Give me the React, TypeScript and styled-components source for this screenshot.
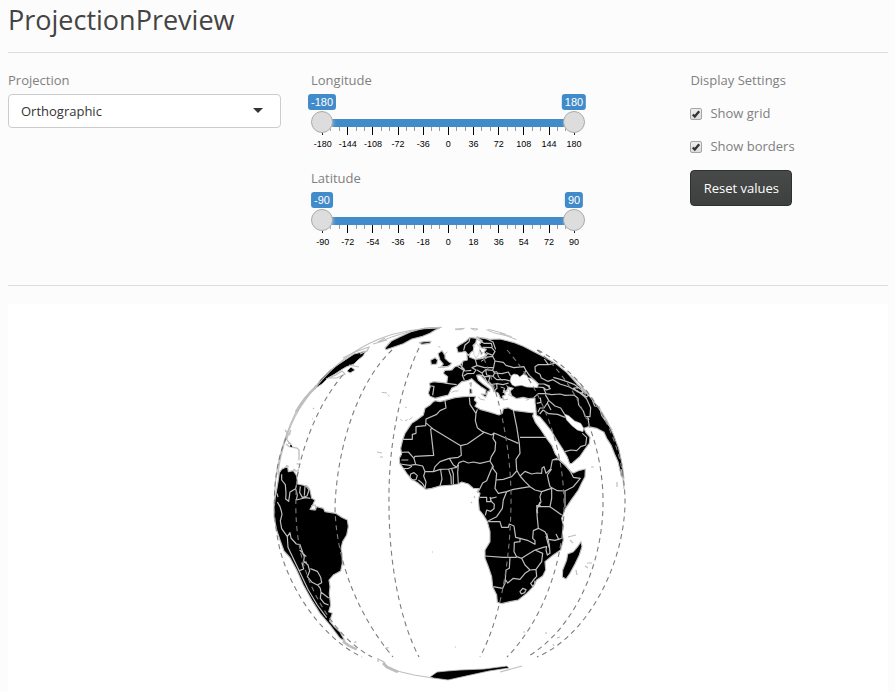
import React from "react";
import styled, { createGlobalStyle } from "styled-components";

const GlobalStyle = createGlobalStyle`
  html { overflow: hidden; }
  body {
    margin: 0 7px 0 8px;
    height: 692px;
    overflow: hidden;
    background: #fcfcfc;
    color: #808080;
    font: 13px/18px "Open Sans", sans-serif;
  }
  * { box-sizing: border-box; }
`;

const Page = styled.main`
  display: flex;
  flex-direction: column;
  height: 692px;
`;
const Title = styled.h1`
  margin: 0;
  height: 53px;
  border-bottom: 1px solid #dcdcdc;
  font-size: 27px;
  font-weight: 400;
  line-height: 39px;
  color: #444;
`;
const Controls = styled.section`
  display: grid;
  grid-template-columns: 273px 274px 1fr;
  column-gap: 30px;
  height: 233px;
  padding-top: 18px;
  border-bottom: 1px solid #dcdcdc;
`;
const Column = styled.div<{ $indent?: number }>`
  padding-left: ${(p) => p.$indent ?? 0}px;
`;
const Label = styled.div`
  height: 23px;
`;
const Select = styled.div`
  display: flex;
  align-items: center;
  justify-content: space-between;
  height: 34px;
  padding: 0 17px 0 12px;
  border: 1px solid #ccc;
  border-radius: 4px;
  background: #fff;
  color: #333;
`;
const Caret = styled.span`
  border: 5px solid transparent;
  border-top-color: #333;
  border-bottom: 0;
  margin-bottom: 2px;
`;
const SliderBox = styled.div`
  position: relative;
  height: 75px;
  padding-top: 25px;
  font-family: "Liberation Sans", sans-serif;
`;
const Track = styled.div`
  height: 8px;
  margin: 0 11px;
  background: #428bca;
`;
const Tip = styled.span<{ $at: number }>`
  position: absolute;
  top: 0;
  left: ${(p) => p.$at}px;
  transform: translateX(-50%);
  padding: 0 3px;
  height: 16px;
  border-radius: 3px;
  background: #428bca;
  color: #fff;
  font-size: 11px;
  line-height: 16px;
`;
const Handle = styled.span<{ $at: number }>`
  position: absolute;
  top: 17px;
  left: ${(p) => p.$at}px;
  width: 22px;
  height: 22px;
  border: 1px solid #aaa;
  border-radius: 50%;
  background: #ddd;
  box-shadow: 1px 1px 3px rgba(255, 255, 255, 0.3);
`;
const Ticks = styled.div`
  display: flex;
  justify-content: space-between;
  width: 253px;
  margin-left: 11px;
  height: 8px;
`;
const Tick = styled.span<{ $major: boolean }>`
  width: 1px;
  height: ${(p) => (p.$major ? 8 : 4)}px;
  background: ${(p) => (p.$major ? "#000" : "#999")};
`;
const Scale = styled.div`
  display: flex;
  justify-content: space-between;
  width: 276.6px;
  margin-left: -0.9px;
  font-size: 9px;
  line-height: 10px;
  padding-top: 4px;
  color: #000;
`;
const ScaleText = styled.span`
  width: 25.1px;
  display: flex;
  justify-content: center;
  white-space: nowrap;
`;
const CheckRow = styled.label`
  display: flex;
  align-items: center;
  gap: 8px;
  height: 33px;
  position: relative;
  top: 2px;
`;
const CheckBox = styled.span`
  width: 12px;
  height: 12px;
  margin-top: 3px;
  border: 1px solid #a5a5a5;
  border-radius: 2px;
  background: linear-gradient(#eee, #dcdcdc);
  display: flex;
`;
const Button = styled.button`
  display: block;
  width: 102px;
  height: 36px;
  margin-top: 10px;
  padding: 0;
  border: 1px solid #2e2f2f;
  border-radius: 4px;
  background: linear-gradient(#484a49, #3e403f);
  color: #fff;
  font: 13px "Open Sans", sans-serif;
`;
const MapPanel = styled.section`
  flex: 1;
  margin-top: 18px;
  background: #fff;
  svg { display: block; }
`;
const Land = styled.g<{ $width?: number }>`
  fill: #000;
  stroke: #bebebe;
  stroke-width: ${(p) => p.$width ?? 3.4};
  stroke-linejoin: round;
`;
const Borders = styled.g`
  fill: none;
  stroke: #bebebe;
  stroke-width: 3.6;
  stroke-linejoin: round;
`;
const Meridians = styled.g`
  fill: none;
  stroke: #7d7d7d;
  stroke-width: 1.1;
  stroke-dasharray: 5 4;
`;
const Water = styled.g`
  fill: #fff;
  stroke: #bebebe;
  stroke-width: 2;
`;

function Slider({ max, values }: { max: number; values: number[] }) {
  return (
    <SliderBox>
      <Track />
      <Ticks>
        {Array.from({ length: 31 }, (_, i) => <Tick key={i} $major={i % 3 === 0} />)}
      </Ticks>
      <Scale>
        {values.map((v) => <ScaleText key={v}>{v}</ScaleText>)}
      </Scale>
      <Handle $at={0} />
      <Handle $at={252} />
      <Tip $at={11}>-{max}</Tip>
      <Tip $at={263}>{max}</Tip>
    </SliderBox>
  );
}

function Check({ text }: { text: string }) {
  return (
    <CheckRow>
      <CheckBox>
        <svg width="10" height="10" viewBox="0 0 10 10">
          <path d="M1.8 5.4 3.8 7.6 8.2 2.2" fill="none" stroke="#333" strokeWidth="2.3" />
        </svg>
      </CheckBox>
      {text}
    </CheckRow>
  );
}

const steps = [-5, -4, -3, -2, -1, 0, 1, 2, 3, 4, 5];

function Globe() {
  return (
    <svg width="880" height="388" viewBox="8 304 880 388">
      {/* Africa and Madagascar */}
      <g transform="translate(390 380) scale(.33333)">
        <Land>
          <path d="M135 62 150 65 165 61 195 53 220 50 240 49 257 49 253 60 261 68 255 79 270 88 295 95 315 101 327 105 337 100 340 86 355 83 370 91 400 95 432 99 428 108 436 127 451 147 471 177 486 197 496 222 511 242 527 257 540 273 550 279 565 272 586 267 585 290 575 309 565 330 545 358 525 388 515 415 520 435 517 460 520 480 512 510 490 525 465 545 467 570 458 588 440 600 430 620 410 640 385 660 360 665 335 671 322 667 320 645 308 620 305 590 295 560 285 535 285 510 300 485 300 455 292 425 280 405 268 390 265 360 270 340 262 335 267 326 250 325 235 312 215 306 205 312 185 315 150 318 125 325 107 328 85 310 65 298 50 280 40 265 29 250 28 235 35 222 32 205 38 180 45 160 65 130 80 120 100 105 105 85 120 75 130 65Z" />
          <path d="M573 485 576 500 568 525 555 552 540 580 528 597 517 591 518 570 530 540 533 522 550 515 563 500Z" />
        </Land>
        <Borders>
          <path d="M165 62 168 84 150 92 140 103 108 117 107 137 78 140 78 160 67 163 67 178 38 178M107 128 128 146 212 197 232 192 283 157M128 145 122 147 131 226 75 229 70 235M238 52 240 73 250 88 258 100 262 88M258 100 256 122 262 143 278 155 305 165 312 159 385 190M370 91 380 140 388 191 390 220 378 238 380 270 390 288M390 172H468M212 197 214 226 205 232 178 235 150 245 135 260 130 275M178 235 190 255 200 262 207 248 220 243 235 249 250 246 270 250 300 243M312 160 309 175 317 187 315 212 304 230 300 243 310 260 303 270 290 302 278 309 265 335" />
          <path d="M305 260 320 280 318 300 340 298 365 290 380 273M318 300 315 325 325 340 350 335 370 328 420 320M390 288 405 274 425 282 440 279 455 280 456 265 462 260 468 280 482 267 487 240 502 235M488 240 505 238 525 255 540 272 550 292 571 295 550 320 525 333 502 332 480 320 475 300 472 285 485 267M390 288 405 305 420 320 435 330 455 335 475 328 485 325M525 333V382M455 335 450 350 453 366 444 380 480 380 515 405M485 325 485 355 480 380M270 352H290V365H302V355L320 351M300 351 304 364 313 373 312 386 302 394 290 390 286 406M350 335 340 360 337 385 320 410 300 420 292 425" />
          <path d="M295 425H330L335 442 355 442 358 432 372 438 377 472 390 475 390 485 373 487 372 515 380 530 395 535M285 528 340 532 380 532M390 475 415 482 435 493 435 482 428 475 430 452 445 445M450 366 440 390 442 415 445 445 465 455 472 470M475 478 495 481 518 474M470 460 478 495 480 520 472 525 468 510 470 498M395 535 415 522 435 510 460 502 469 500M395 535 405 555 420 570 438 568 455 545 458 520 435 510M360 532 358 565 348 570 345 610 338 625 310 620M347 600 353 609 370 595 390 598 405 580 420 570M438 568 440 589 430 600 427 605 422 610 428 619 435 612 434 602M390 635 398 625 408 629 404 638 394 642Z" />
          <path d="M34 217 55 216 72 235 77 253 60 256 30 252M34 240H55M39 266 56 265 66 259M75 253 98 258 105 275 130 275 151 268 176 267 200 262M62 282 72 278 82 287 78 299 66 300 60 292ZM85 300 98 311 106 325M105 275 101 288 108 306 105 326M150 318 156 297 152 270M176 268 183 290 184 313M185 267 190 282V312M205 255 203 278 205 312M443 400 440 377 452 376M478 504 474 490 468 468" />
        </Borders>
      </g>

      {/* Europe, Arabia and the rest of Asia */}
      <g transform="translate(380 315) scale(.33333)">
        <Land>
          <path d="M148 205 160 200 190 203 200 205 203 185 190 175 195 166 215 165 225 155 240 150 250 138 262 135 261 120 270 113 268 126 285 133 310 130 320 120 312 112 319 103 304 98 298 88 307 78 290 66 330 73 360 72 400 82 430 94 465 112 500 130 530 148 560 172 590 205 625 240 650 270 680 315 700 358 716 400 727 450 732 492 724 484 714 440 704 418 693 390 680 370 672 352 650 340 625 335 612 340 618 353 630 367 628 385 615 402 600 424 576 445 569 446 562 426 548 402 529 373 514 348 494 323 480 306 469 301 468 285 465 262 465 249 445 251 430 247 410 251 395 242 390 228 400 220 385 216 379 229 370 226 376 239 367 244 371 253 361 249 355 235 345 230 335 215 315 195 300 180 290 182 295 195 310 208 330 222 329 229 324 228 320 238 317 237 318 225 305 217 290 205 275 191 262 197 245 200 232 212 215 220 205 240 185 245 165 250 150 244 145 235 151 215Z" />
          <path d="M230 97 240 89 258 78 270 67 290 70 287 84 279 91 283 104 273 112 265 121 256 109 247 111 234 112Z" />
          <path d="M174 116 186 107 195 121 195 130 206 140 215 145 205 155 183 155 190 147 180 135ZM152 136 165 128 173 135 170 147 154 149ZM304 237 321 238 317 247ZM268 222 275 222 276 235 270 237ZM269 205 274 203 273 215Z" />
          <path d="M15 99 34 78 60 65 96 49 135 39 184 37 166 45 150 55 128 64 96 72 70 86 42 96 18 104ZM118 83 132 80 153 79 150 85 125 88Z" />
        </Land>
        <Water>
          <path d="M394 182 402 177 413 179 419 186 430 178 440 180 444 188 454 190 464 197 476 206 472 218 455 217 440 216 424 211 405 214 396 209 390 198ZM553 297 566 302 584 318 602 325 611 340 609 350 592 345 576 332 560 315ZM288 82 300 99 296 119 288 129 282 118 280 103Z" />
        </Water>
        <Borders>
          <path d="M152 213 162 214 158 241M201 205 230 209M232 154 251 166 247 181 253 195M240 150 254 164M248 141 245 158 255 168 274 166M286 134 291 152 276 158 288 165 281 175 261 176 251 183M290 151 314 158 341 157 345 137 338 124 315 127M318 113 338 121 345 109 335 98 308 97M290 72 312 85 334 85 337 97M344 138 370 142 378 151 401 158 432 155 438 167 430 179M341 157 338 166 344 174 366 176 385 171 392 184M345 172 339 184 350 194 375 194 391 198M338 166 317 164 306 174 291 165M317 165 320 180 340 184M306 174 310 185 330 185 326 199 335 209 351 206 369 209 386 204M290 180 311 182 323 204 338 212 341 230 351 219 350 206M270 68 267 80 255 90 251 106M290 66 320 71 339 81 347 103" />
          <path d="M438 167 448 181 465 197 475 207 493 207 510 214M524 145 505 149 493 132M505 149 474 149 465 155 466 170 480 178 484 189 503 199 519 194 540 207 568 216 601 235 622 247M520 187 541 193 561 200 584 209 602 223M490 206 504 213 511 221 499 225 491 218 472 216M491 220 498 236 475 236 461 248M498 236 515 239 540 237 555 241 582 240 594 250 596 270 610 288 615 304 630 305 632 278 620 252 610 242 590 226M496 239 506 256 525 273 542 279 554 298M470 265 483 262 481 248M474 291 480 279 492 279 502 264 506 255M479 297 489 285 506 296 533 298 555 307M502 264 513 285M623 305 628 335M636 252 644 273 658 275 665 301 678 320 697 345M555 410 573 405 590 407 602 395 617 390 620 367 607 355M572 180 588 195 603 208 612 223 624 232M590 208 605 217 608 234 591 230 581 219 597 218 618 238M607 223 628 239 620 245 599 232M650 270 668 295 682 324" />
        </Borders>
        <g fill="none" stroke="#bebebe" strokeWidth="3">
          <path d="M0 80 35 66 68 56 112 44M225 42 253 40 245 44 226 44M272 40 294 42 286 46ZM319 44 340 53 378 62 410 74M325 43 360 52 378 58M360 55 395 65M175 95 181 96M193 118 202 111M174 157 192 158 212 150M5 232 21 234M23 239 28 243M75 277H80M61 312 67 318M75 317 83 314M88 314 98 306M215 232 224 228 235 228M300 130 326 116M300 118 309 112M303 139 323 127M362 216 374 220 369 233 383 229M380 211 392 231 385 239 396 244M368 255 384 253M438 256 448 252M295 245 302 253 314 255M340 171 351 170 356 187 367 196" />
        </g>
      </g>

      {/* South America */}
      <g transform="translate(265 430) scale(.33333)">
        <Land>
          <path d="M62 112 50 118 43 128 40 150 35 180 30 205 27 230 27 260 35 300 45 330 57 363 75 383 95 420 115 465 140 510 165 550 195 585 225 625 240 634 225 606 208 590 194 573 202 550 191 545 197 525 195 510 193 490 195 470 192 450 205 435 227 423 232 400 231 370 228 355 233 335 245 315 250 290 247 270 230 262 212 250 180 245 175 235 155 230 150 240 135 238 143 225 150 210 140 205 135 180 127 168 112 165 98 162 95 137 85 122 70 125 68 112Z" />
        </Land>
        <Borders>
          <path d="M50 133 50 150 61 164 63 190 62 207 71 214 75 186 92 176 96 158M93 178 97 196 94 210 106 207 122 203 136 205M106 169 104 188 112 202 126 198 132 180 122 166M120 168 118 197M37 216 45 230 49 243 51 253 46 273 50 296 67 320 69 352 80 375 104 425 130 480 157 525 185 563M67 320 75 308 78 324 94 342 105 344 114 370 124 380M36 190 39 201M104 360 112 368 118 380 116 393 129 405 134 423 127 440 141 457 157 465 170 458 167 442 157 424 136 416M103 422 116 417 111 399 126 396M158 465 166 475 168 487 191 504M168 487 166 505 178 520 191 525M139 227 151 225 152 239 138 238" />
        </Borders>
        <g fill="none" stroke="#bebebe" strokeWidth="4">
          <path d="M63 112 65 107 71 110M85 117 95 124M60 0 70 13 65 28 74 40 80 47M63 42 73 50 96 54 102 60 102 91M95 101 104 103M100 117 98 133M77 0 73 15M69 40H79" />
          <path d="M234 634 250 646 275 658" strokeWidth="8" />
          <path d="M268 638 274 635M360 655 371 653" />
        </g>
        <path d="M75 45 80 46 82 51 76 50Z" />
      </g>

      {/* North America along the western limb */}
      <Land $width={1}>
        <path d="M314 389 321 379 329 371 336 366 345 360 354 354 366 351 363 356 358 360 354 364 346 367 341 370 335 374 328 378 322 384Z" />
        <path d="M347 371 351 367 355 370 350 373Z" />
      </Land>
      <g fill="none" stroke="#bebebe" strokeWidth="1.2">
        <path d="M274.5 505 C274 475 281 443 296 412 C302 400 310 392 316 387 C331 368 353 350 379 339 C399 331 420 328 440 328" />
        <path d="M278 475 C280 449 292 418 304 402 L316 385M326 379 336 375 342 371 345 374 337 378 329 378M343 358 355 352 369 347 367 351 360 354M373 344 387 340M378 342 385 338M349 365 359 367" />
        <path d="M296 412 C303 400 309 393 316 387" strokeWidth="2.5" />
      </g>

      {/* Antarctica */}
      <path d="M430 677 437 672 447 671 460 670 484 669 507 666 509 668 489 671 466 676 448 680 433 678Z" fill="#000" stroke="#bebebe" strokeWidth=".8" />
      <g fill="none" stroke="#bebebe" strokeWidth="1.2">
        <path d="M378 659 384 662 386 667 397 671 414 675 433 678M500 672 511 669 522 666M378 658 378 662" />
        <path d="M383 663 387 667 398 672" strokeWidth="3" />
        <path d="M556 534 559 540M568 537 576 535M587 563 592 563M576 570 577 575M588 418 589 420M570 540 573 543M585 566 588 568M545 633 547 633M557 638 560 637M553 644 554 646M523 632 525 632M455 647H456M477 491 478 493M474 496 475 498M471 502 472 503M432 552H433M377 452 382 453M380 457 383 457M313 408 314 409M312 419H313" />
        <path d="M591 467 594 467M621 469 623 479 624 489M617 482V487" />
      </g>

      <Meridians>
        <path d="M286 438 C274 467 270 507 280 550 C292 594 324 639 362 657" />
        <path d="M343 375 C320 401 303 443 297 478 C294 514 297 540 303 562 C313 599 338 639 372 657" />
        <path d="M392 350 C360 380 338 441 335 505 C335 548 351 607 393 657" />
        <path d="M419 348 C399 390 388 448 389 505 C389 560 399 619 419 657" />
        <path d="M480 350 C499 390 512 450 511 505 C510 565 500 619 480 657" />
        <path d="M507 350 C543 390 564 448 564 505 C564 560 544 619 507 657" />
        <path d="M537 350 C577 382 604 443 603 505 C602 569 572 631 527 657" />
        <path d="M538 350 C593 379 626 443 625 505 C623 567 587 636 537 657" />
      </Meridians>
    </svg>
  );
}

export default function App() {
  return (
    <>
      <GlobalStyle />
      <Page>
        <Title>ProjectionPreview</Title>
        <Controls>
          <Column>
            <Label>Projection</Label>
            <Select>Orthographic<Caret /></Select>
          </Column>
          <Column>
            <Label>Longitude</Label>
            <Slider max={180} values={steps.map((n) => n * 36)} />
            <Label>Latitude</Label>
            <Slider max={90} values={steps.map((n) => n * 18)} />
          </Column>
          <Column $indent={75.4}>
            <Label>Display Settings</Label>
            <Check text="Show grid" />
            <Check text="Show borders" />
            <Button>Reset values</Button>
          </Column>
        </Controls>
        <MapPanel><Globe /></MapPanel>
      </Page>
    </>
  );
}
